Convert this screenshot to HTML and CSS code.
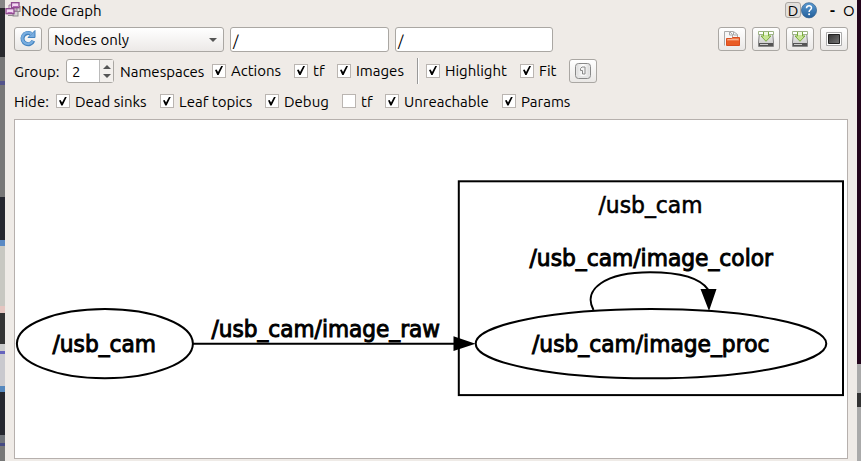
FILE: index.html
```html
<!DOCTYPE html>
<html lang="en">
<head>
<meta charset="utf-8">
<title>Node Graph</title>
<link rel="stylesheet" href="styles.css">
</head>
<body>
<div class="screen">
<div class="edge-left"></div>
<main class="window">
  <header class="titlebar">
    <svg class="app-icon" width="16" height="17" viewBox="0 0 16 17"><g stroke="#8d8a8c" fill="#d5d2d4"><rect x="8" y="10" width="5" height="5"/><rect x="11" y="5.500" width="4" height="5"/><path d="M3 14.500h6" /></g><path d="M7 4H4v6M9 10.500h3V6" stroke="#9b759c" fill="none"/><g fill="#f3d9f3" stroke="#8c478d" stroke-width="1.300"><rect x="6.500" y="1.700" width="7.500" height="5"/><rect x="1" y="7.700" width="8" height="5"/></g><path d="M8 5.500h5M2.500 11.500h5" stroke="#b565b7"/></svg>
    <span class="title">Node Graph</span>
    <button class="dock">D</button>
    <svg class="help" width="16" height="17" viewBox="0 0 16 17"><defs><linearGradient id="blue" x2="0" y2="1"><stop stop-color="#5b9ad1"/><stop offset="1" stop-color="#235f9b"/></linearGradient></defs><circle cx="8" cy="8.300" r="7.600" fill="url(#blue)" stroke="#315f8c" stroke-width=".7"/><path d="M5.500 6.200C5.700 2.800 10.800 3.100 10.500 6C10.300 7.800 8.100 7.900 8.100 10" fill="none" stroke="#fff" stroke-width="1.500"/><circle cx="8.100" cy="12.300" r="1" fill="#fff"/></svg>
    <span class="minimize">-</span><span class="maximize">O</span>
  </header>
  <section class="toolbar">
    <button class="tool"><svg class="refresh" width="18" height="18" viewBox="0 0 18 18"><path d="M14.300 11.800A5.600 5.600 0 1 1 12 4.800" fill="none" stroke="#4383bf" stroke-width="4"/><path d="M16 1.500v7H9z" fill="#78ace0" stroke="#4584bf"/><path d="M13.800 12A5.600 5.600 0 1 1 12.500 5" fill="none" stroke="#79aee0" stroke-width="2.300"/></svg></button>
    <div class="select"><span>Nodes only</span><i class="down"></i></div>
    <div class="input">/</div><div class="input">/</div>
    <div class="actions">
      <button class="tool"><svg width="18" height="18" viewBox="0 0 18 18"><path d="M1.500 15.500V1.500h5l3 3v3M6.500 1.500h4l4 3v5" fill="#f6f6f6" stroke="#aaa"/><path d="M6.500 2v3h3M10.500 2v3h4" fill="none" stroke="#aaa"/><path d="M3.500 8.500h5l1-1h7v8h-13z" fill="#ef7b4b" stroke="#d94c1e"/><path d="M4 11h12v4H4z" fill="#e95c25"/><path d="M4.500 9.500h11" stroke="#f9b08c"/></svg></button>
      <button class="tool"><svg width="18" height="18" viewBox="0 0 18 18"><use href="#disk"/></svg></button>
      <button class="tool"><svg width="18" height="18" viewBox="0 0 18 18"><use href="#disk"/></svg></button>
      <button class="tool"><svg width="18" height="18" viewBox="0 0 18 18"><path d="M1.500 2.500h15v13h-15z" fill="#fff" stroke="#aaa"/><path d="M3.500 4.500h11v9h-11z" fill="url(#screen)" stroke="#222"/></svg></button>
    </div>
  </section>
  <section class="row group-row">
    <span class="group-label">Group:</span><div class="spin"><span>2</span><div><i class="up"></i><i class="down"></i></div></div><span class="namespaces">Namespaces</span>
    <label class="check actions-c"><i class="box on"></i>Actions</label><label class="check tf-c"><i class="box on"></i>tf</label><label class="check images-c"><i class="box on"></i>Images</label>
    <div class="separator"></div>
    <label class="check highlight-c"><i class="box on"></i>Highlight</label><label class="check fit-c"><i class="box on"></i>Fit</label>
    <button class="tool"><svg width="18" height="18" viewBox="0 0 18 18"><rect x="1.500" y="1.500" width="15" height="15" rx="3" fill="#e5e5e5" stroke="#888"/><rect x="3" y="2" width="12" height="12" rx="2" fill="url(#key)"/><path d="M6.500 6.500l1.500-1.500h3v7H8.500V8.500h-2z" fill="#f6f6f6" stroke="#888"/></svg></button>
  </section>
  <section class="row hide-row">
    <span class="hide-label">Hide:</span><label class="check dead"><i class="box on"></i>Dead sinks</label><label class="check leaf"><i class="box on"></i>Leaf topics</label><label class="check debug"><i class="box on"></i>Debug</label><label class="check tf2"><i class="box"></i>tf</label><label class="check unreach"><i class="box on"></i>Unreachable</label><label class="check params"><i class="box on"></i>Params</label>
  </section>
  <section class="graph">
    <svg width="832" height="338" viewBox="15 120 832 338">
      <g class="lines"><rect x="458.800" y="181.300" width="384.200" height="213.800"/><ellipse cx="104.900" cy="343.700" rx="88" ry="34.600"/><ellipse cx="651" cy="343.700" rx="175.300" ry="34.600"/><path d="M193 343.700H455M593.500 310C582 289 606 272.300 650 272.300C681 272.300 701 279 708.500 290"/></g>
      <path class="arrow" d="M453.500 336.300L475.500 343.700L453.500 351zM700.500 289L716.500 289L709 311z"/>
      <g class="labels"><text x="52.500" y="352" textLength="103.500" lengthAdjust="spacingAndGlyphs">/usb_cam</text><text x="211.500" y="337" textLength="228.500" lengthAdjust="spacingAndGlyphs">/usb_cam/image_raw</text><text class="cluster" x="598.500" y="213" textLength="104" lengthAdjust="spacingAndGlyphs">/usb_cam</text><text x="529.500" y="266" textLength="243.500" lengthAdjust="spacingAndGlyphs">/usb_cam/image_color</text><text x="532" y="352" textLength="237.500" lengthAdjust="spacingAndGlyphs">/usb_cam/image_proc</text></g>
    </svg>
  </section>
</main>
<div class="edge-right"></div>
</div>
<svg width="0" height="0" class="defs"><defs><linearGradient id="screen" x2="1" y2="1"><stop stop-color="#333"/><stop offset="1" stop-color="#777"/></linearGradient><linearGradient id="key"><stop stop-color="#ddd"/><stop offset=".5" stop-color="#fff"/><stop offset="1" stop-color="#ddd"/></linearGradient><linearGradient id="metal" x2="0" y2="1"><stop stop-color="#f5f5f5"/><stop offset="1" stop-color="#c4c4c4"/></linearGradient><g id="disk"><path d="M2.500 2h13l1 10v4.500h-15V12z" fill="url(#metal)" stroke="#888"/><path d="M2 13h14v3H2z" fill="#555"/><path d="M3 14.500h8" stroke="#ccc"/><path d="M1.500 1.500h15v3h-15z" fill="#fff" stroke="#8aa66c" stroke-width=".8"/><path d="M6.500 2v4H4L9 11.300L14 6h-2.500V2" fill="#c7e594" stroke="#79ab3b"/><path d="M7 2h4v3H7z" fill="#eef8df"/></g></defs></svg>
</body>
</html>
```

FILE: styles.css
```css
* { box-sizing: border-box; }
body { margin: 0; overflow: hidden; background: #efebe7; color: #000; font: 15px Ubuntu, "Noto Sans", sans-serif; }
.screen { display: grid; grid-template-columns: 5px 852px 4px; height: 461px; }
.edge-left { background: linear-gradient(#858585 0 8px, #292a2e 8px 57px, #777 57px 81px, #53548b 81px 85px, #777 85px 197px, #25272f 197px 240px, #5b8ac4 240px 246px, #c8c8c2 246px 306px, #e5c6c1 306px 313px, #333 313px 344px, #ccc 344px 351px, #6664bd 351px 354px, #c9c9ce 354px 386px, #5688bd 386px 392px, #25272f 392px 435px, #70747a 435px 443px, #464a83 443px 446px, #777 446px); }
.edge-right { background: linear-gradient(#23051b 0 364px, #aaa 364px 393px, #333 393px 407px, #aaa 407px); }
.window { min-width: 0; }
.titlebar { display: flex; height: 25px; line-height: 22px; align-items: flex-start; }
.app-icon { flex: none; margin-top: 1px; }
.title { margin-right: auto; font-size: 15px; }
button { padding: 0; font: inherit; color: #000; }
.dock { width: 16px; height: 16px; margin-top: 2px; line-height: 15px; border: 1px solid #aaa7a3; border-radius: 3px; background: #e2dfdb; }
.help { margin-top: 2px; }
.minimize { width: 6px; margin-left: 13px; font-weight: bold; }
.maximize { width: 14px; margin-left: 7px; }
.toolbar { display: flex; align-items: flex-start; height: 32px; padding: 2px 9px; }
.tool { width: 28px; height: 24px; display: grid; place-items: center; border: 1px solid #aaa7a3; border-radius: 3px; background: linear-gradient(#fff, #eae8e6); }
.refresh { margin-top: -2px; }
.select { width: 176px; height: 25px; margin-left: 6px; display: flex; align-items: center; justify-content: space-between; padding: 0 6px 0 5px; border: 1px solid #aaa7a3; border-radius: 3px; background: linear-gradient(#fff, #ece9e7); }
.up, .down { display: block; border: 4px solid transparent; }
.down { border-top-color: #555; border-bottom: 0; }
.up { border-bottom-color: #555; border-top: 0; }
.input { width: 159px; height: 25px; margin-left: 6px; padding-left: 2px; line-height: 25px; border: 1px solid #aaa7a3; border-radius: 3px; background: #fff; }
.input + .input { width: 158px; }
.actions { display: flex; gap: 6px; margin-left: auto; }
.row { display: flex; align-items: center; padding-left: 9px; }
.group-row { height: 28px; }
.spin { display: flex; width: 48px; height: 24px; border: 1px solid #aaa7a3; border-radius: 3px; background: #fff; }
.spin span { width: 33px; padding-left: 5px; line-height: 23px; border-right: 1px solid #bbb; }
.spin div { flex: 1; display: grid; place-items: center; padding: 2px 0; background: #f3f0ed; }
.group-label { width: 52px; }
.namespaces { width: 92px; padding-left: 6px; margin-right: 6px; white-space: nowrap; }
.check { display: flex; align-items: center; height: 20px; margin-top: -1px; white-space: nowrap; gap: 5px; }
.box { width: 14px; height: 14px; flex: none; border: 1px solid #bab5b1; background: #fff; display: grid; place-items: center; }
.on::after { content: ""; width: 8px; height: 9px; background: #000; clip-path: polygon(0 45%, 20% 38%, 38% 66%, 78% 0, 100% 0, 45% 100%, 28% 100%); }
.actions-c { width: 82px; } .tf-c { width: 43px; } .images-c { width: 80px; }
.separator { width: 2px; height: 26px; margin-right: 7px; border-left: 1px solid #999; border-right: 1px solid #fff; }
.highlight-c { width: 94px; } .fit-c { width: 49px; }
.hide-row { height: 34px; }
.hide-row .check, .hide-label { margin-top: -2px; }
.hide-label { width: 42px; } .dead { width: 104px; } .leaf { width: 105px; } .debug { width: 77px; } .tf2 { width: 43px; } .unreach { width: 117px; }
.graph { width: 834px; height: 340px; margin-left: 9px; border: 1px solid #b6b0ad; background: #fff; }
.graph svg { display: block; }
.lines { fill: none; stroke: #000; stroke-width: 2; }
.labels { font: 23px "DejaVu Sans", sans-serif; stroke: #000; stroke-width: 1px; }
.cluster { stroke-width: .6px; }
.defs { position: absolute; }
```
